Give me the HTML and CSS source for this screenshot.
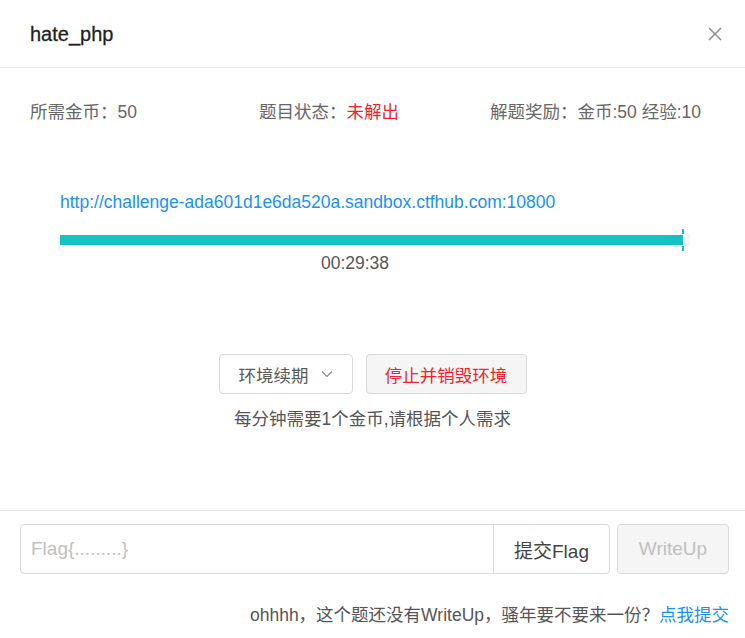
FILE: index.html
```html
<!DOCTYPE html>
<html>
<head>
<meta charset="utf-8">
<link rel="stylesheet" href="styles.css">
</head>
<body>
<div class="modal">
  <div class="header">
    <div class="title">hate_php</div>
    <svg class="close" width="16" height="16" viewBox="0 0 16 16"><path d="M2 2L14 14M14 2L2 14" stroke="#8c8c8c" stroke-width="1.5" fill="none"/></svg>
  </div>
  <div class="body">
    <div class="info">
      <div>所需金币：50</div>
      <div>题目状态：<span class="red">未解出</span></div>
      <div class="third">解题奖励：金币:50 经验:10</div>
    </div>
    <div class="env">
      <div class="url">http://challenge-ada601d1e6da520a.sandbox.ctfhub.com:10800</div>
      <div class="progress">
        <div class="track"><div class="fill" style="width: 98.9%"></div></div>
        <div class="marker"></div>
      </div>
      <div class="time">00:29:38</div>
    </div>
    <div class="actions">
      <button class="btn renew">环境续期 <svg width="12" height="8" viewBox="0 0 12 8"><path d="M1 1.5L6 6.5L11 1.5" stroke="#888" stroke-width="1.2" fill="none"/></svg></button>
      <button class="btn destroy">停止并销毁环境</button>
    </div>
    <div class="note">每分钟需要1个金币,请根据个人需求</div>
  </div>
  <div class="footer">
    <div class="row">
      <div class="group">
        <div class="input">Flag{.........}</div>
        <div class="addon">提交Flag</div>
      </div>
      <div class="wu">WriteUp</div>
    </div>
    <div class="tip">ohhhh，这个题还没有WriteUp，骚年要不要来一份？<span class="link">点我提交</span></div>
  </div>
</div>
</body>
</html>
```
FILE: styles.css
```css
* { box-sizing: border-box; }
html, body { margin: 0; padding: 0; background: #fff; }
body {
  font-family: "Liberation Sans", "Noto Sans CJK SC", sans-serif;
  color: #666;
  font-size: 17.5px;
}
.modal { width: 745px; height: 638px; overflow: hidden; }
.header {
  height: 68px;
  border-bottom: 1px solid #e8e8e8;
  display: flex;
  align-items: center;
  justify-content: space-between;
  padding: 0 22px 0 30px;
}
.title { font-size: 20px; color: #1f1f1f; font-weight: 500; padding-top: 2px; -webkit-text-stroke: 0.3px #1f1f1f; }
.close { display: block; }
.body { padding: 0 30px; }
.info {
  display: grid;
  grid-template-columns: 229px 231px 1fr;
  margin-top: 32px;
  line-height: 24px;
  color: #666;
}
.red { color: #f5222d; }
.env { padding: 0 30px; margin-top: 66px; }
.url { color: #1890ff; line-height: 24px; }
.progress { position: relative; margin-top: 21px; width: 630px; }
.track { height: 10px; background: #f5f5f5; }
.fill { height: 10px; background: #13c2c2; }
.marker {
  position: absolute;
  left: 622px;
  top: -6px;
  width: 2px;
  height: 22px;
  background: linear-gradient(#13c2c2 0 5px, transparent 5px 17px, #13c2c2 17px);
}
.time { width: 590px; text-align: center; margin-top: 7px; line-height: 22px; color: #555; }
.actions {
  display: flex;
  justify-content: center;
  gap: 13px;
  margin-top: 80px;
}
.btn {
  height: 40px;
  border: 1px solid #d9d9d9;
  border-radius: 4px;
  font-family: inherit;
  font-size: 17.5px;
  padding: 0;
  display: flex;
  align-items: center;
  justify-content: center;
  white-space: nowrap;
}
.renew { background: #fff; color: #595959; width: 134px; gap: 12px; }
.destroy { background: #f5f5f5; color: #f5222d; width: 161px; }
.note { text-align: center; margin-top: 13px; line-height: 24px; color: #555; }
.footer { margin-top: 79px; border-top: 1px solid #e8e8e8; padding: 13px 16px 0 20px; }
.row { display: flex; gap: 7px; }
.group {
  display: flex;
  width: 590px;
  height: 50px;
  border: 1px solid #d9d9d9;
  border-radius: 4px;
}
.input {
  flex: 1;
  display: flex;
  align-items: center;
  padding-left: 10px;
  color: #bfbfbf;
  font-size: 19px;
  border-right: 1px solid #d9d9d9;
}
.addon {
  width: 115px;
  display: flex;
  align-items: center;
  justify-content: center;
  color: #444;
  font-size: 19px;
}
.wu {
  width: 112px;
  height: 50px;
  border: 1px solid #d9d9d9;
  border-radius: 4px;
  background: #f5f5f5;
  color: #bfbfbf;
  display: flex;
  align-items: center;
  justify-content: center;
  font-size: 19px;
}
.tip { text-align: right; margin-top: 29px; line-height: 24px; color: #555; }
.link { color: #1890ff; }
```
